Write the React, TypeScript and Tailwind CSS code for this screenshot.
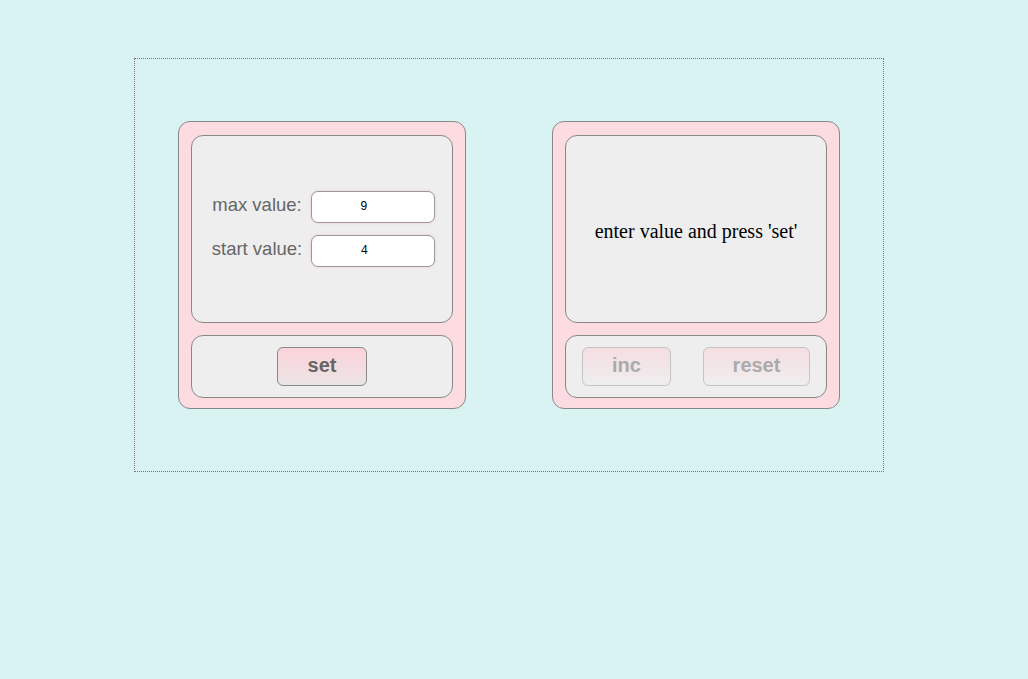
import React from 'react';

const Card = ({ children }: { children: React.ReactNode }) => (
  <div className="w-[288px] h-[288px] rounded-[12px] border border-[#888] bg-[#fcdce1] pt-[13px] pb-[10px] px-[12px] flex flex-col gap-[12px]">
    {children}
  </div>
);

const Field = ({ label, value }: { label: string; value: string }) => (
  <div className="flex items-center gap-[9px]">
    <span className="text-[18.5px] text-[#666] mb-[4px] font-[family-name:'Liberation_Sans',Arial,sans-serif]">{label}</span>
    <input
      readOnly
      value={value}
      className="w-[124px] h-[32px] pr-[18px] rounded-[7px] border border-[#999] bg-white text-center text-[12px] text-black font-[family-name:'Courier_New','Liberation_Mono',monospace] shadow-[0_0_3px_#f0c6d6] outline-none"
    />
  </div>
);

const Btn = ({ label, width, disabled }: { label: string; width: string; disabled?: boolean }) => (
  <button
    disabled={disabled}
    className={`${width} h-[39px] pb-[3px] rounded-[6px] border text-[20px] font-bold font-[family-name:'Liberation_Sans',Arial,sans-serif] bg-gradient-to-b ${
      disabled
        ? 'border-[#c4c4c4] text-[#ababab] from-[#f6dee2] to-[#eeeeee]'
        : 'border-[#888] text-[#666] from-[#fcd3da] to-[#ebe4e5]'
    }`}
  >
    {label}
  </button>
);

export default function App() {
  return (
    <div className="min-h-[679px] w-full bg-[#d9f3f3] pt-[58px] pl-[134px]">
      <div className="w-[750px] h-[414px] border border-dotted border-[#777] flex items-center justify-around">
        {/* Settings */}
        <Card>
          <div className="h-[188px] rounded-[12px] border border-[#888] bg-[#eeeeee] flex flex-col justify-center items-center gap-[12px] pl-[3px]">
            <Field label="max value:" value="9" />
            <Field label="start value:" value="4" />
          </div>
          <div className="h-[63px] rounded-[12px] border border-[#888] bg-[#eeeeee] flex items-center justify-center">
            <Btn label="set" width="w-[90px]" />
          </div>
        </Card>

        {/* Counter */}
        <Card>
          <div className="h-[188px] rounded-[12px] border border-[#888] bg-[#eeeeee] flex items-center justify-center pt-[4px]">
            <span className="text-[20px] text-black font-[family-name:'Liberation_Serif','Times_New_Roman',serif]">
              enter value and press 'set'
            </span>
          </div>
          <div className="h-[63px] rounded-[12px] border border-[#888] bg-[#eeeeee] flex items-center justify-between px-[16px]">
            <Btn label="inc" width="w-[89px]" disabled />
            <Btn label="reset" width="w-[107px]" disabled />
          </div>
        </Card>
      </div>
    </div>
  );
}
